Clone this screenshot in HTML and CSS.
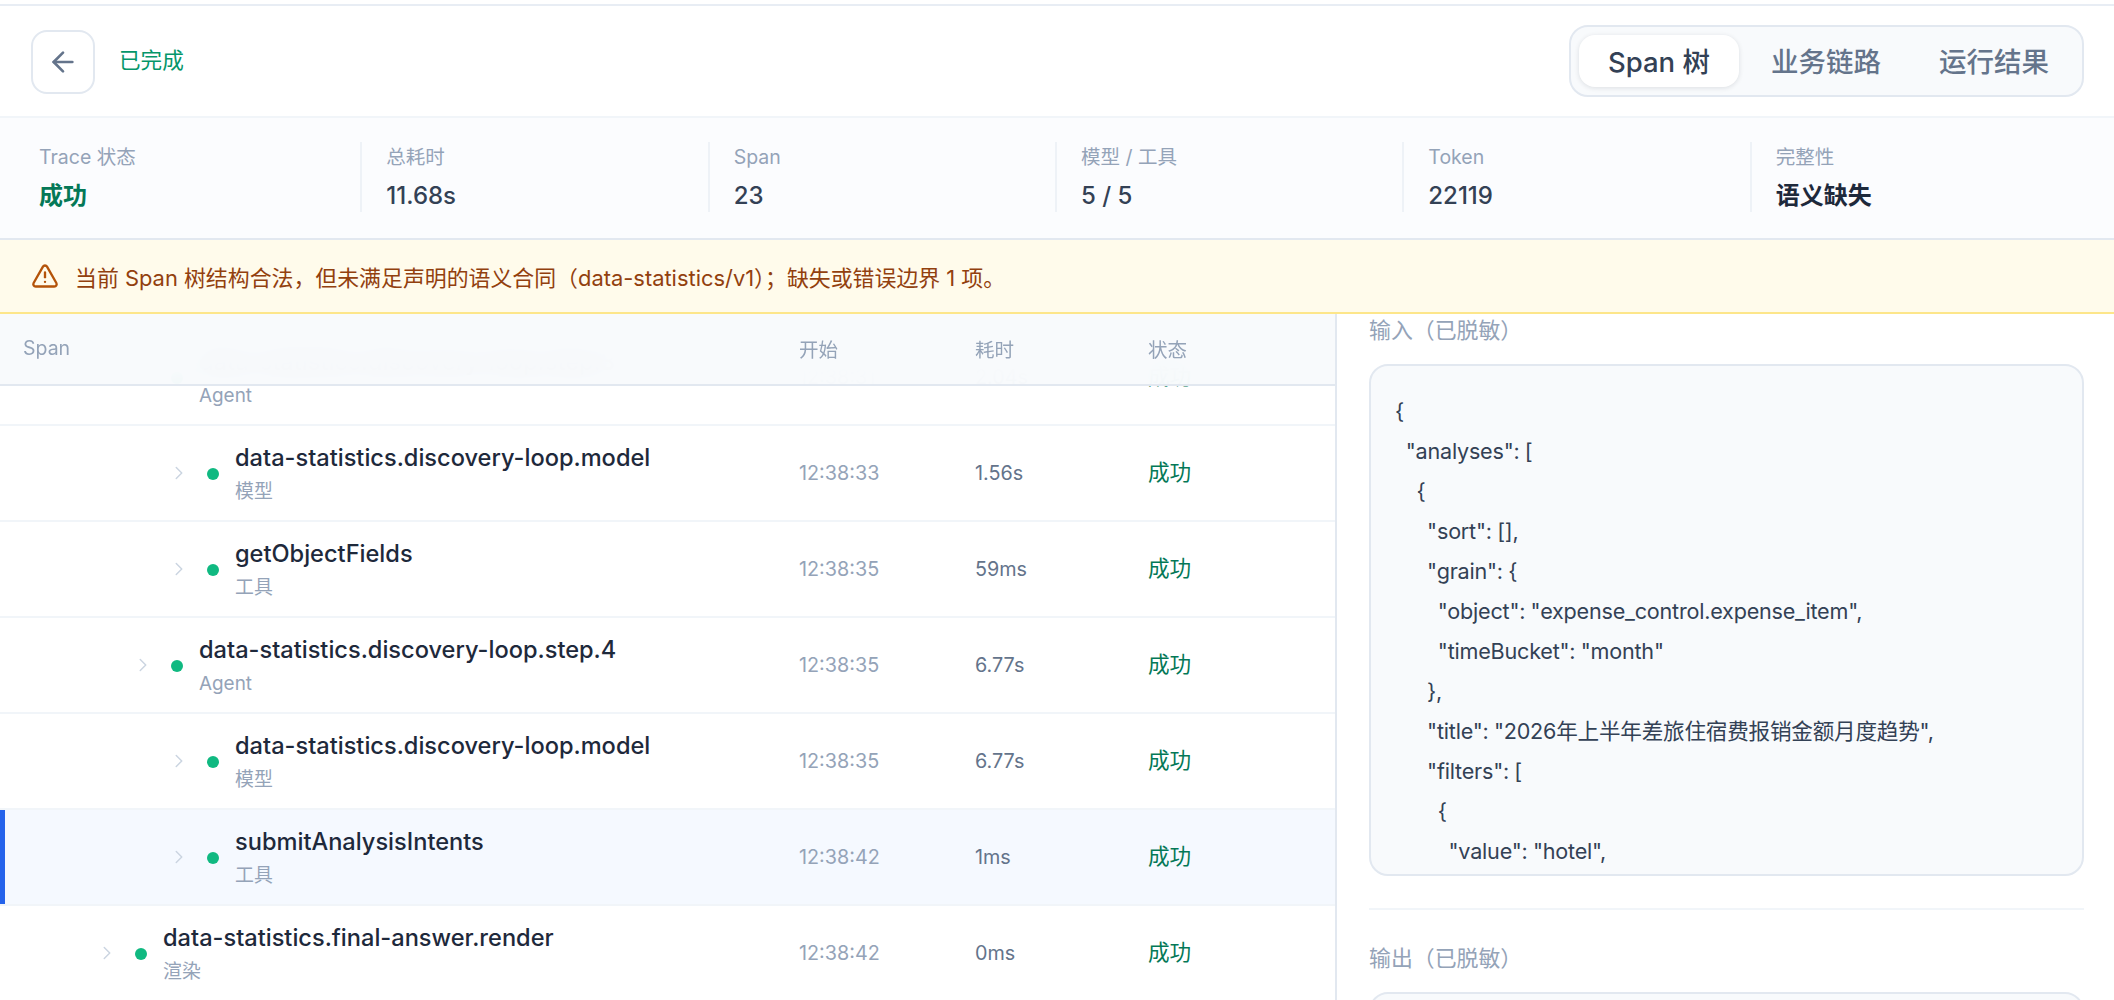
FILE: index.html
```html
<!DOCTYPE html>
<html lang="zh-CN">
<head>
    <meta charset="UTF-8">
    <meta name="viewport" content="width=device-width, initial-scale=1.0">
    <title>Span 树</title>
    <link rel="stylesheet" href="styles.css">
</head>
<body>

<div class="page">
    <header class="topbar">
        <div class="topbar-left">
            <button class="back-btn" type="button" aria-label="返回">
                <svg width="32" height="32" viewBox="0 0 24 24" fill="none" stroke="currentColor" stroke-width="2" stroke-linecap="round" stroke-linejoin="round"><path d="m12 19-7-7 7-7"/><path d="M19 12H5"/></svg>
            </button>
            <span class="run-status">已完成</span>
        </div>
        <nav class="tabs">
            <a class="tab active">Span 树</a>
            <a class="tab">业务链路</a>
            <a class="tab">运行结果</a>
        </nav>
    </header>

    <section class="stats">
        <div class="stat"><div class="stat-label">Trace 状态</div><div class="stat-value ok">成功</div></div>
        <div class="stat"><div class="stat-label">总耗时</div><div class="stat-value num">11.68s</div></div>
        <div class="stat"><div class="stat-label">Span</div><div class="stat-value num">23</div></div>
        <div class="stat"><div class="stat-label">模型 / 工具</div><div class="stat-value num">5 / 5</div></div>
        <div class="stat"><div class="stat-label">Token</div><div class="stat-value num">22119</div></div>
        <div class="stat"><div class="stat-label">完整性</div><div class="stat-value">语义缺失</div></div>
    </section>

    <div class="banner">
        <svg width="28" height="28" viewBox="0 0 24 24" fill="none" stroke="currentColor" stroke-width="2" stroke-linecap="round" stroke-linejoin="round"><path d="m21.73 18-8-14a2 2 0 0 0-3.48 0l-8 14A2 2 0 0 0 4 21h16a2 2 0 0 0 1.73-3"/><path d="M12 9v4"/><path d="M12 17h.01"/></svg>
        <span>当前 Span 树结构合法，但未满足声明的语义合同（data-statistics/v1）；缺失或错误边界 1 项。</span>
    </div>

    <main class="content">
        <section class="tree">
            <div class="tree-head row-grid">
                <div>Span</div>
                <div>开始</div>
                <div>耗时</div>
                <div>状态</div>
            </div>
            <div class="tree-rows" id="tree-rows"></div>
        </section>

        <aside class="detail">
            <div class="detail-label">输入（已脱敏）</div>
<pre class="code-box">{
  "analyses": [
    {
      "sort": [],
      "grain": {
        "object": "expense_control.expense_item",
        "timeBucket": "month"
      },
      "title": "2026年上半年差旅住宿费报销金额月度趋势",
      "filters": [
        {
          "value": "hotel",
          "field": "expense_type"
        }
      ]
    }
  ]
}</pre>
            <hr class="detail-sep">
            <div class="detail-label">输出（已脱敏）</div>
            <pre class="code-box">{
  "accepted": true
}</pre>
        </aside>
    </main>
</div>

<script src="app.js"></script>
</body>
</html>
```

FILE: styles.css
```css
* {
    box-sizing: border-box;
}
html, body {
    height: 100%;
}
body {
    margin: 0;
    overflow: hidden;
    background: #fff;
    color: #1e293b;
    font-family: Inter, "Noto Sans CJK SC", sans-serif;
    padding-top: 4px;
}
.page {
    border-top: 2px solid #e8edf4;
    height: calc(100vh - 4px);
    display: flex;
    flex-direction: column;
}
.topbar {
    height: 112px;
    flex: none;
    display: flex;
    justify-content: space-between;
    align-items: center;
    padding: 0 30px 0 31px;
    border-bottom: 2px solid #f1f5f9;
}
.topbar-left {
    display: flex;
    align-items: center;
    gap: 24px;
}
.back-btn {
    width: 64px;
    height: 64px;
    margin-top: 2px;
    display: flex;
    align-items: center;
    justify-content: center;
    padding: 0;
    background: #fff;
    color: #64748b;
    border: 2px solid #e2e8f0;
    border-radius: 16px;
}
.run-status {
    margin-bottom: 6px;
    font-size: 21.6px;
    color: #059669;
}
.tabs {
    display: flex;
    padding: 8px 4px 8px 8px;
    background: #f8fafc;
    border: 2px solid #e2e8f0;
    border-radius: 19px;
}
.tab {
    height: 52px;
    padding-top: 3px;
    line-height: 49px;
    padding-left: 29px;
    padding-right: 29px;
    font-size: 27.5px;
    font-weight: 500;
    color: #64748b;
    border-radius: 16px;
}
.tab.active {
    margin-right: 3px;
    background: #fff;
    color: #334155;
    box-shadow: 0 1px 5px rgba(15, 23, 42, 0.12);
}
.stats {
    height: 122px;
    flex: none;
    display: grid;
    grid-template-columns: repeat(6, 1fr);
    padding: 24px 15px 26px;
    background: #fbfcfe;
    border-bottom: 2px solid #e2e8f0;
}
.stat {
    padding: 0 24px;
    border-right: 2px solid #eef2f7;
}
.stat:last-child {
    border-right: none;
}
.stat-label {
    font-size: 19.5px;
    line-height: 30px;
    color: #94a3b8;
}
.stat-value {
    margin-top: 9px;
    font-size: 24px;
    line-height: 30px;
    font-weight: 600;
    color: #1e293b;
}
.stat-value.ok {
    color: #047857;
}
.stat-value.num {
    font-weight: 500;
    color: #334155;
}
.banner {
    height: 74px;
    flex: none;
    display: flex;
    align-items: center;
    gap: 16px;
    padding: 0 31px;
    background: #fffbeb;
    border-bottom: 2px solid #fde68a;
    color: #92400e;
    font-size: 21.9px;
}
.banner svg {
    color: #b45309;
    flex: none;
}
.content {
    flex: 1;
    min-height: 0;
    display: flex;
}
.tree {
    position: relative;
    width: 1337px;
    flex: none;
    overflow: hidden;
    border-right: 2px solid #e2e8f0;
}
.row-grid {
    display: grid;
    grid-template-columns: 1fr 176px 173px 187px;
    align-items: center;
}
.tree-head {
    position: absolute;
    top: 0;
    left: 0;
    right: 0;
    height: 72px;
    padding-left: 23px;
    padding-bottom: 2px;
    background: rgba(248, 250, 252, 0.96);
    backdrop-filter: blur(14px);
    border-bottom: 2px solid #e2e8f0;
    font-size: 19.5px;
    color: #94a3b8;
    z-index: 2;
}
.tree-rows {
    padding-top: 16px;
}
.tree-row {
    height: 96px;
    border-bottom: 2px solid #f1f5f9;
    padding-left: 23px;
}
.tree-row.selected {
    background: #f5f9ff;
    box-shadow: inset 5px 0 0 #2563eb;
}
.span-cell {
    display: flex;
    align-items: center;
}
.depth-1 {
    padding-left: 73px;
}
.depth-2 {
    padding-left: 109px;
}
.depth-3 {
    padding-left: 145px;
}
.chevron {
    flex: none;
    color: #cbd5e1;
}
.dot {
    flex: none;
    width: 12px;
    height: 12px;
    margin: 2px 16px 0 17px;
    border-radius: 50%;
    background: #10b981;
}
.span-text {
    padding-top: 1px;
}
.span-name {
    font-size: 23.6px;
    line-height: 30px;
    font-weight: 500;
    color: #1e293b;
    white-space: nowrap;
}
.span-kind {
    margin-top: 6px;
    font-size: 18.9px;
    line-height: 26px;
    color: #94a3b8;
}
.cell-start {
    font-size: 19.8px;
    color: #94a3b8;
}
.cell-time {
    font-size: 19.8px;
    color: #64748b;
}
.cell-status {
    margin-bottom: 5px;
    font-size: 21.6px;
    color: #047857;
}
.detail {
    flex: 1;
    min-width: 0;
    overflow: hidden;
    padding: 0 30px 0 32px;
}
.detail-label {
    height: 34px;
    line-height: 32px;
    font-size: 21.9px;
    color: #94a3b8;
}
.code-box {
    margin: 16px 0 0;
    height: 512px;
    overflow: hidden;
    padding: 24.5px 24px;
    background: #f8fafc;
    border: 2px solid #e2e8f0;
    border-radius: 19px;
    font-family: Inter, "Noto Sans CJK SC", sans-serif;
    font-size: 21.6px;
    letter-spacing: -0.22px;
    word-spacing: -0.5px;
    line-height: 40px;
    color: #334155;
}
.detail-sep {
    height: 2px;
    margin: 32px 0 32px;
    border: none;
    background: #f1f5f9;
}
```

FILE: app.js
```js
let spans = [
    { name: "data-statistics.discovery-loop.step.3", kind: "Agent", depth: 2, start: "12:38:31", time: "2.04s" },
    { name: "data-statistics.discovery-loop.model", kind: "模型", depth: 3, start: "12:38:33", time: "1.56s" },
    { name: "getObjectFields", kind: "工具", depth: 3, start: "12:38:35", time: "59ms" },
    { name: "data-statistics.discovery-loop.step.4", kind: "Agent", depth: 2, start: "12:38:35", time: "6.77s" },
    { name: "data-statistics.discovery-loop.model", kind: "模型", depth: 3, start: "12:38:35", time: "6.77s" },
    { name: "submitAnalysisIntents", kind: "工具", depth: 3, start: "12:38:42", time: "1ms", selected: true },
    { name: "data-statistics.final-answer.render", kind: "渲染", depth: 1, start: "12:38:42", time: "0ms" }
];

document.getElementById("tree-rows").innerHTML = spans.map(s => `
    <div class="tree-row row-grid${s.selected ? " selected" : ""}">
        <div class="span-cell depth-${s.depth}">
            <svg class="chevron" width="22" height="22" viewBox="0 0 24 24" fill="none" stroke="currentColor" stroke-width="1.6" stroke-linecap="round" stroke-linejoin="round"><path d="m9 18 6-6-6-6"/></svg>
            <span class="dot"></span>
            <div class="span-text">
                <div class="span-name">${s.name}</div>
                <div class="span-kind">${s.kind}</div>
            </div>
        </div>
        <div class="cell-start">${s.start}</div>
        <div class="cell-time">${s.time}</div>
        <div class="cell-status">成功</div>
    </div>
`).join("");
```
